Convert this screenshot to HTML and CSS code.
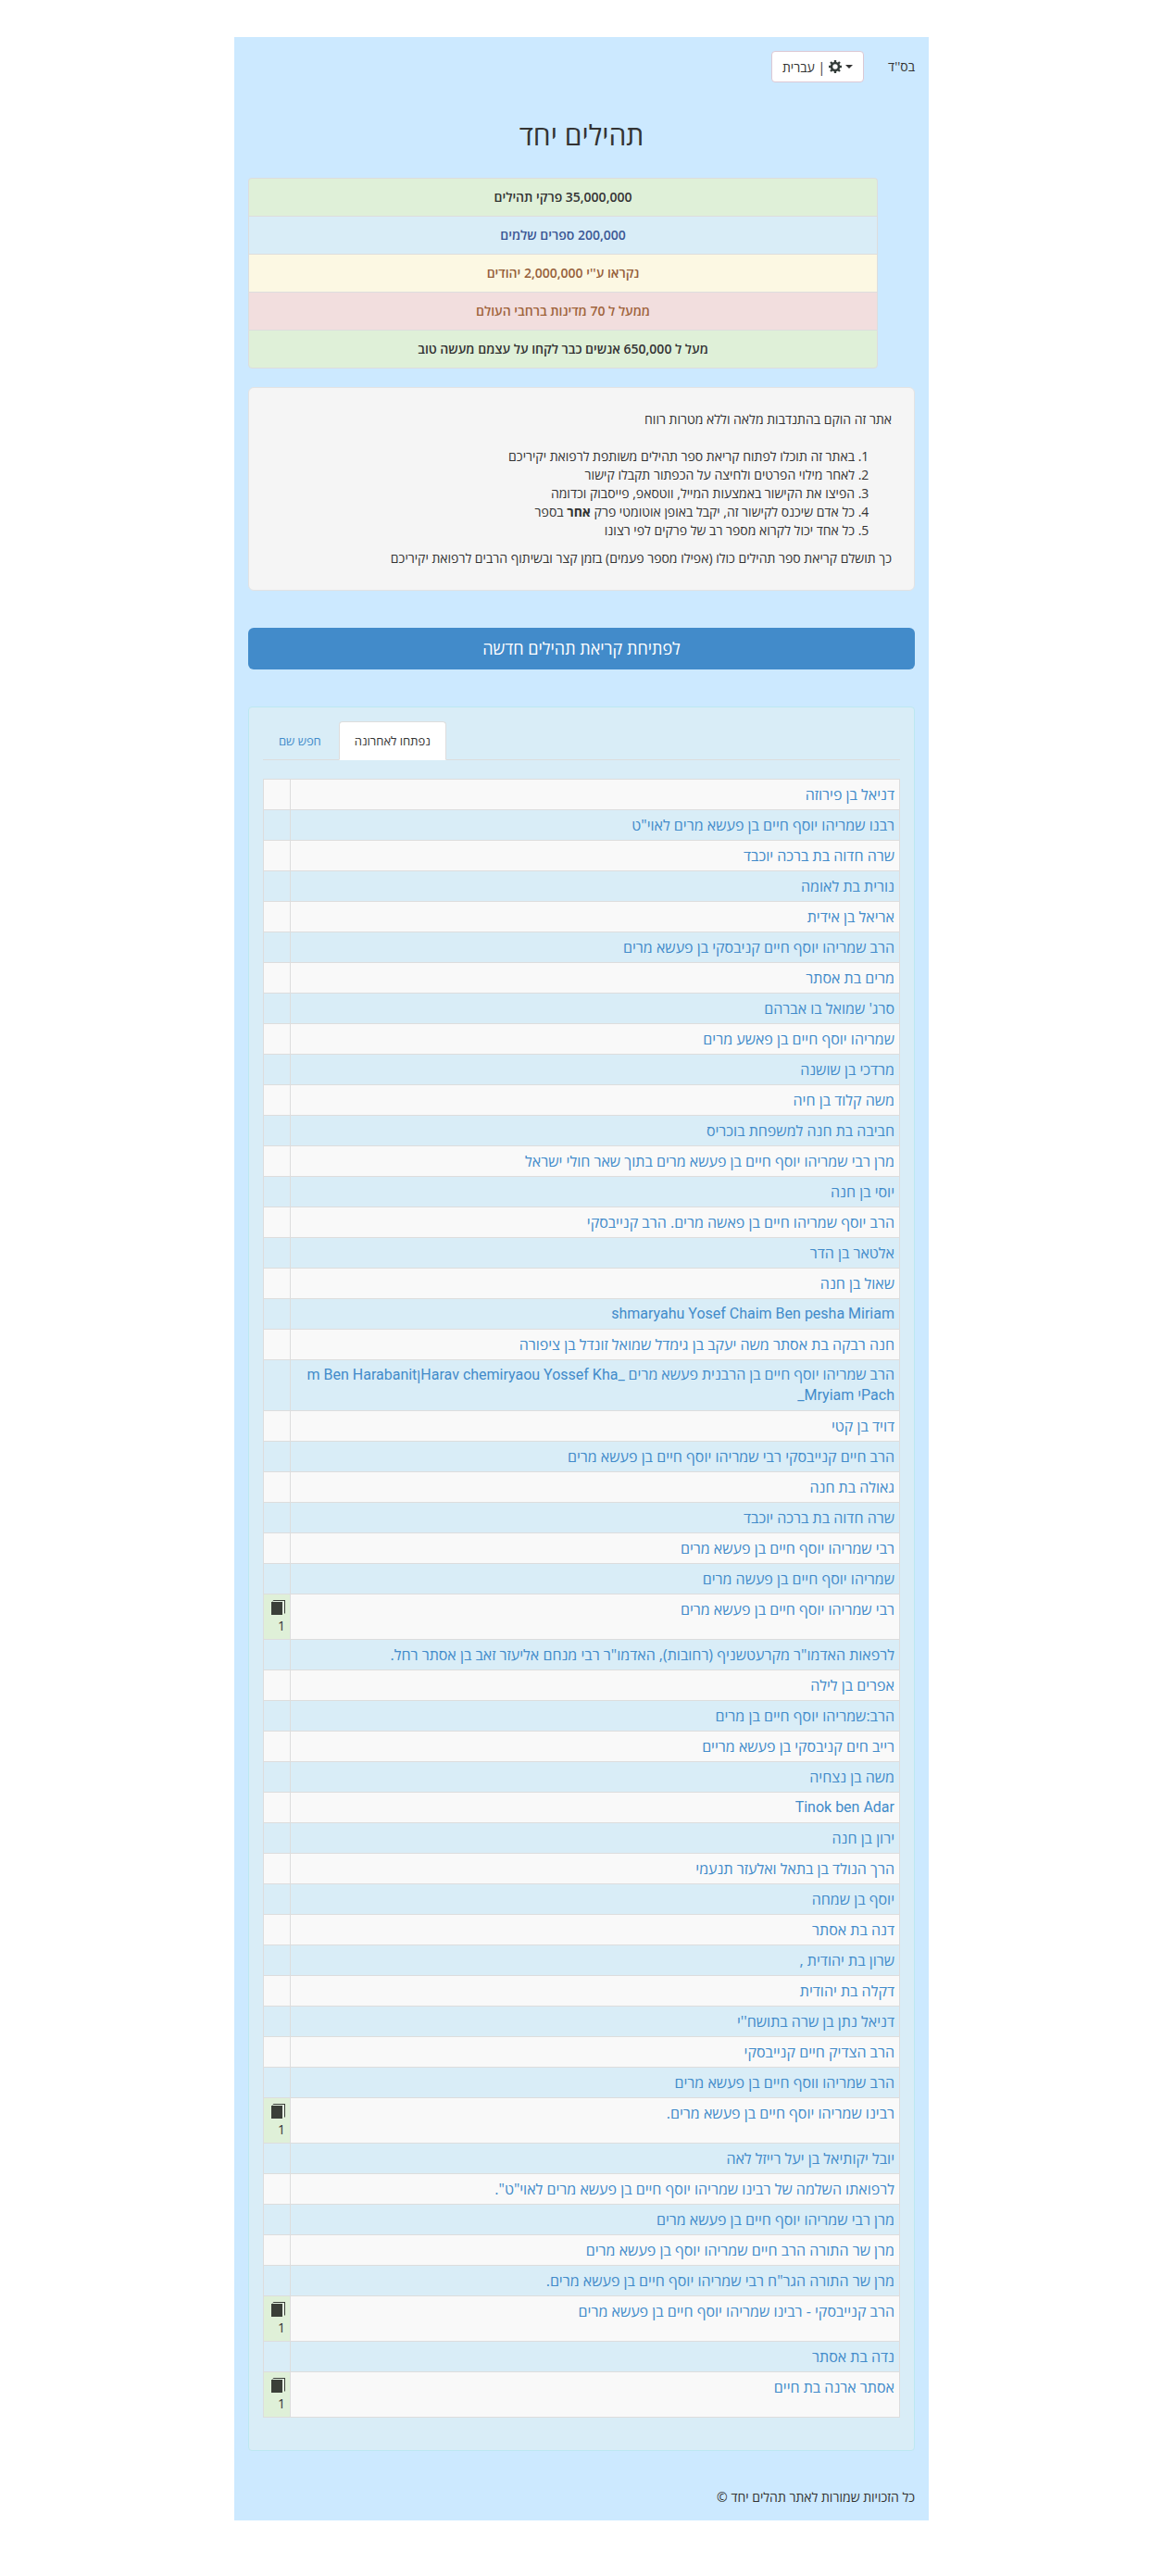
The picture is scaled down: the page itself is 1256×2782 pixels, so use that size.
FILE: index.html
```
<!DOCTYPE html>
<html lang="he" dir="rtl">
<head>
  <meta charset="UTF-8" />
  <meta name="viewport" content="width=device-width, initial-scale=1" />
  <title>תהילים יחד</title>
  <link rel="stylesheet" href="styles.css">
</head>
<body>
  <!-- book icon, used in the list -->
  <svg class="sprite" aria-hidden="true">
    <symbol id="book" viewBox="0 0 15 16">
      <path d="M0 2h12v14H0z" fill="#3a3f38" />
      <path d="M1 1.500L2.500 0H15v14l-1 1V1H3L2 2z" fill="#3a3f38" />
      <path d="M2 1h12v13h-2V2H1z" fill="#e4f2e2" />
      <path d="M14 0.500h1V13h-1z" fill="#3a3f38" />
    </symbol>
  </svg>

  <div class="container">
    <header class="top">
      <span>בס''ד</span>
      <button type="button" class="btn-lang">
        <span class="caret"></span>
        <svg class="gear" viewBox="0 0 14 14" aria-hidden="true">
          <g fill="none" stroke="#333c39">
            <circle cx="7" cy="7" r="4" stroke-width="2.600" />
            <path d="M7 0v2.500M7 11.500V14M0 7h2.500M11.500 7H14M2 2l2 2M10 10l2 2M12 2l-2 2M4 10l-2 2" stroke-width="2.400" />
          </g>
        </svg>
        <span>| עברית</span>
      </button>
    </header>

    <h1>תהילים יחד</h1>

    <ul class="stats">
      <li class="success">35,000,000 פרקי תהילים</li>
      <li class="info">200,000 ספרים שלמים</li>
      <li class="warning">נקראו ע''י 2,000,000 יהודים</li>
      <li class="danger">ממעל ל 70 מדינות ברחבי העולם</li>
      <li class="success">מעל ל 650,000 אנשים כבר לקחו על עצמם מעשה טוב</li>
    </ul>

    <div class="well">
      <p>אתר זה הוקם בהתנדבות מלאה וללא מטרות רווח</p>
      <ol>
        <li>באתר זה תוכלו לפתוח קריאת ספר תהילים משותפת לרפואת יקיריכם</li>
        <li>לאחר מילוי הפרטים ולחיצה על הכפתור תקבלו קישור</li>
        <li>הפיצו את הקישור באמצעות המייל, ווטסאפ, פייסבוק וכדומה</li>
        <li>כל אדם שיכנס לקישור זה, יקבל באופן אוטומטי פרק <strong>אחר</strong> בספר</li>
        <li>כל אחד יכול לקרוא מספר רב של פרקים לפי רצונו</li>
      </ol>
      <p>כך תושלם קריאת ספר תהילים כולו (אפילו מספר פעמים) בזמן קצר ובשיתוף הרבים לרפואת יקיריכם</p>
    </div>

    <button type="button" class="btn-open">לפתיחת קריאת תהילים חדשה</button>

    <div class="panel">
      <nav class="tabs">
        <a href="#recent" class="active">נפתחו לאחרונה</a>
        <a href="#search">חפש שם</a>
      </nav>

      <table class="names" id="recent">
        <tbody>
          <tr><td><a href="#">דניאל בן פירוזה</a></td><td></td></tr>
          <tr><td><a href="#">רבנו שמריהו יוסף חיים בן פעשא מרים לאוי"ט</a></td><td></td></tr>
          <tr><td><a href="#">שרה חדוה בת ברכה יוכבד</a></td><td></td></tr>
          <tr><td><a href="#">נורית בת לאומה</a></td><td></td></tr>
          <tr><td><a href="#">אריאל בן אידית</a></td><td></td></tr>
          <tr><td><a href="#">הרב שמריהו יוסף חיים קניבסקי בן פעשא מרים</a></td><td></td></tr>
          <tr><td><a href="#">מרים בת אסתר</a></td><td></td></tr>
          <tr><td><a href="#">סרג' שמואל בו אברהם</a></td><td></td></tr>
          <tr><td><a href="#">שמריהו יוסף חיים בן פאשע מרים</a></td><td></td></tr>
          <tr><td><a href="#">מרדכי בן שושנה</a></td><td></td></tr>
          <tr><td><a href="#">משה קלוד בן חיה</a></td><td></td></tr>
          <tr><td><a href="#">חביבה בת חנה למשפחת בוכריס</a></td><td></td></tr>
          <tr><td><a href="#">מרן רבי שמריהו יוסף חיים בן פעשא מרים בתוך שאר חולי ישראל</a></td><td></td></tr>
          <tr><td><a href="#">יוסי בן חנה</a></td><td></td></tr>
          <tr><td><a href="#">הרב יוסף שמריהו חיים בן פאשה מרים. הרב קנייבסקי</a></td><td></td></tr>
          <tr><td><a href="#">אלטאר בן הדר</a></td><td></td></tr>
          <tr><td><a href="#">שאול בן חנה</a></td><td></td></tr>
          <tr><td class="latin"><a href="#">shmaryahu Yosef Chaim Ben pesha Miriam</a></td><td></td></tr>
          <tr><td><a href="#">חנה רבקה בת אסתר משה יעקב בן גימדל שמואל זונדל בן ציפורה</a></td><td></td></tr>
          <tr><td class="latin"><a href="#">הרב שמריהו יוסף חיים בן הרבנית פעשא מרים _Harav chemiryaou Yossef Khaןm Ben Harabanit Pachי Mryiam_</a></td><td></td></tr>
          <tr><td><a href="#">דויד בן קטי</a></td><td></td></tr>
          <tr><td><a href="#">הרב חיים קנייבסקי רבי שמריהו יוסף חיים בן פעשא מרים</a></td><td></td></tr>
          <tr><td><a href="#">גאולה בת חנה</a></td><td></td></tr>
          <tr><td><a href="#">שרה חדוה בת ברכה יוכבד</a></td><td></td></tr>
          <tr><td><a href="#">רבי שמריהו יוסף חיים בן פעשא מרים</a></td><td></td></tr>
          <tr><td><a href="#">שמריהו יוסף חיים בן פעשה מרים</a></td><td></td></tr>
          <tr><td><a href="#">רבי שמריהו יוסף חיים בן פעשא מרים</a></td><td class="done"><svg><use href="#book" /></svg>1</td></tr>
          <tr><td><a href="#">לרפאות האדמו"ר מקרעטשניף (רחובות), האדמו"ר רבי מנחם אליעזר זאב בן אסתר רחל.</a></td><td></td></tr>
          <tr><td><a href="#">אפרים בן לילה</a></td><td></td></tr>
          <tr><td><a href="#">הרב:שמריהו יוסף חיים בן מרים</a></td><td></td></tr>
          <tr><td><a href="#">רייב חים קניבסקי בן פעשא מריים</a></td><td></td></tr>
          <tr><td><a href="#">משה בן נצחיה</a></td><td></td></tr>
          <tr><td class="latin"><a href="#">Tinok ben Adar</a></td><td></td></tr>
          <tr><td><a href="#">ירון בן חנה</a></td><td></td></tr>
          <tr><td><a href="#">הרך הנולד בן בתאל ואלעזר תנעמי</a></td><td></td></tr>
          <tr><td><a href="#">יוסף בן שמחה</a></td><td></td></tr>
          <tr><td><a href="#">דנה בת אסתר</a></td><td></td></tr>
          <tr><td><a href="#">שרון בת יהודית ,</a></td><td></td></tr>
          <tr><td><a href="#">דקלה בת יהודית</a></td><td></td></tr>
          <tr><td><a href="#">דניאל נתן בן שרה בתושח''י</a></td><td></td></tr>
          <tr><td><a href="#">הרב הצדיק חיים קנייבסקי</a></td><td></td></tr>
          <tr><td><a href="#">הרב שמריהו ווסף חיים בן פעשא מרים</a></td><td></td></tr>
          <tr><td><a href="#">רבינו שמריהו יוסף חיים בן פעשא מרים.</a></td><td class="done"><svg><use href="#book" /></svg>1</td></tr>
          <tr><td><a href="#">יובל יקותיאל בן יעל רייזל לאה</a></td><td></td></tr>
          <tr><td><a href="#">לרפואתו השלמה של רבינו שמריהו יוסף חיים בן פעשא מרים לאוי"ט".</a></td><td></td></tr>
          <tr><td><a href="#">מרן רבי שמריהו יוסף חיים בן פעשא מרים</a></td><td></td></tr>
          <tr><td><a href="#">מרן שר התורה הרב חיים שמריהו יוסף בן פעשא מרים</a></td><td></td></tr>
          <tr><td><a href="#">מרן שר התורה הגר"ח רבי שמריהו יוסף חיים בן פעשא מרים.</a></td><td></td></tr>
          <tr><td><a href="#">הרב קנייבסקי - רבינו שמריהו יוסף חיים בן פעשא מרים</a></td><td class="done"><svg><use href="#book" /></svg>1</td></tr>
          <tr><td><a href="#">נדה בת אסתר</a></td><td></td></tr>
          <tr><td><a href="#">אסתר ארנה בת חיים</a></td><td class="done"><svg><use href="#book" /></svg>1</td></tr>
        </tbody>
      </table>
    </div>

    <footer>כל הזכויות שמורות לאתר תהלים יחד ©</footer>
  </div>
</body>
</html>
```
FILE: styles.css
```
* {
  box-sizing: border-box;
}

body {
  margin: 40px 0 60px;
  font-family: "Open Sans", "Liberation Sans", sans-serif;
  font-size: 14px;
  line-height: 20px;
  color: #333;
  background-color: #fff;
}

.sprite {
  display: none;
}

.container {
  max-width: 750px;
  margin: 0 auto;
  padding: 15px;
  background-color: #cce9ff;
}

.top {
  display: flex;
  align-items: center;
  gap: 26px;
}

button {
  font-family: inherit;
  cursor: pointer;
}

.btn-lang {
  display: flex;
  align-items: center;
  gap: 4px;
  height: 34px;
  padding: 0 11px;
  font-size: 14px;
  color: #333;
  background-color: #fff;
  border: 1px solid #dcc8d4;
  border-radius: 4px;
}

.caret {
  border-top: 4px solid #333;
  border-left: 4px solid transparent;
  border-right: 4px solid transparent;
}

.gear {
  width: 14px;
  height: 14px;
}

h1 {
  margin: 40px 0 30px;
  font-size: 30px;
  font-weight: 400;
  line-height: 33px;
  text-align: center;
}

.stats {
  list-style: none;
  margin: 0 0 20px;
  padding: 0 40px 0 0;
  text-align: center;
  font-weight: 600;
}

.stats li {
  padding: 10px 15px;
  border: 1px solid #ddd;
  border-bottom: 0;
}

.stats li:first-child {
  border-radius: 4px 4px 0 0;
}

.stats li:last-child {
  border-bottom: 1px solid #ddd;
  border-radius: 0 0 4px 4px;
}

.stats .success {
  background-color: #dff0d8;
}

.stats .info {
  color: #3a5795;
  background-color: #d9edf7;
}

.stats .warning {
  color: #96603a;
  background-color: #fcf8e3;
}

.stats .danger {
  color: #a0643c;
  background-color: #f2dede;
}

.well {
  padding: 24px;
  background-color: #f5f5f5;
  border: 1px solid #e3e3e3;
  border-radius: 6px;
}

.well p {
  margin: 0;
}

.well ol {
  margin: 20px 0 10px;
  padding: 0 40px 0 0;
}

.btn-open {
  display: block;
  width: 100%;
  margin: 40px 0;
  padding: 10px 16px;
  font-size: 18px;
  line-height: 25px;
  color: #fff;
  background-color: #428bca;
  border: 0;
  border-radius: 6px;
}

.panel {
  padding: 15px;
  background-color: #d9edf7;
  border: 1px solid #bce8f1;
  border-radius: 4px;
}

a {
  color: #428bca;
  text-decoration: none;
}

.tabs {
  display: flex;
  justify-content: flex-end;
  gap: 2px;
  margin-bottom: 20px;
  border-bottom: 1px solid #ddd;
}

.tabs a {
  margin-bottom: -1px;
  padding: 10px 16px;
  font-size: 13px;
  border: 1px solid transparent;
  border-radius: 4px 4px 0 0;
}

.tabs .active {
  color: #333;
  background-color: #fff;
  border-color: #ddd;
  border-bottom-color: #fff;
}

.names {
  width: 100%;
  margin-bottom: 20px;
  border-collapse: collapse;
  table-layout: fixed;
}

.names td {
  padding: 5px;
  border: 1px solid #ddd;
  vertical-align: top;
  font-size: 16px;
  line-height: 22px;
}

.names td:last-child {
  width: 29px;
  padding: 4px 5px;
  font-size: 14px;
  line-height: 20px;
}

.names .latin {
  font-family: Roboto, "Open Sans", sans-serif;
}

.names tr:nth-child(odd) td {
  background-color: #f9f9f9;
}

.names tr .done.done {
  background-color: #dff0d8;
}

.done svg {
  display: block;
  width: 15px;
  height: 16px;
  margin: 2px 0;
}

footer {
  margin-top: 40px;
}
```
